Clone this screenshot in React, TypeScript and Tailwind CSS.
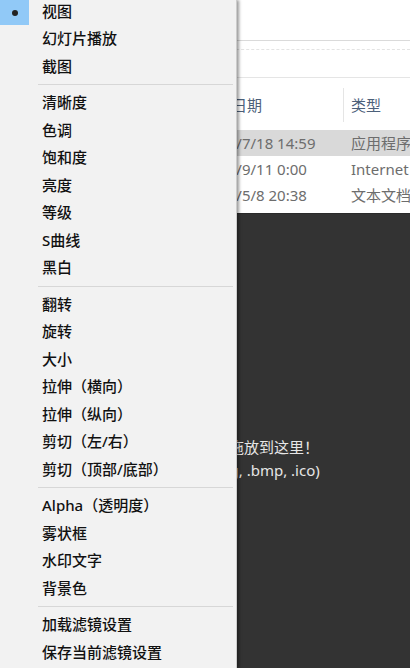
type Entry = { label: string; checked?: boolean } | "sep";

const menu: Entry[] = [
  { label: "视图", checked: true },
  { label: "幻灯片播放" },
  { label: "截图" },
  "sep",
  { label: "清晰度" },
  { label: "色调" },
  { label: "饱和度" },
  { label: "亮度" },
  { label: "等级" },
  { label: "S曲线" },
  { label: "黑白" },
  "sep",
  { label: "翻转" },
  { label: "旋转" },
  { label: "大小" },
  { label: "拉伸（横向）" },
  { label: "拉伸（纵向）" },
  { label: "剪切（左/右）" },
  { label: "剪切（顶部/底部）" },
  "sep",
  { label: "Alpha（透明度）" },
  { label: "雾状框" },
  { label: "水印文字" },
  { label: "背景色" },
  "sep",
  { label: "加载滤镜设置" },
  { label: "保存当前滤镜设置" },
];

const files = [
  { name: "PhotoViewer.exe", date: "2017/7/18 14:59", type: "应用程序", selected: true },
  { name: "网站链接", date: "2016/9/11 0:00", type: "Internet 快捷方式" },
  { name: "说明.txt", date: "2016/5/8 20:38", type: "文本文档" },
];

function ContextMenu() {
  return (
    <div className="absolute left-0 top-0 h-full w-[237px] border-r border-[#cccccc] bg-[#f2f2f2] shadow-[2px_0_3px_rgba(0,0,0,0.4)]">
      <div className="-mt-[2.5px] flex flex-col">
        {menu.map((m, i) =>
          m === "sep" ? (
            <div key={i} className="flex h-[9px] items-center pl-[38px] pr-[3px]">
              <div className="h-px flex-1 bg-[#d7d7d7]" />
            </div>
          ) : (
            <div key={i} className="flex h-[27.5px] items-center">
              <div className="flex w-[42px] shrink-0 self-start">
                {m.checked ? (
                  <div className="mt-[2.5px] flex h-[25px] w-[29px] items-center justify-center bg-[#91c9f7]">
                    <div className="h-[6px] w-[6px] rounded-full bg-[#222]" />
                  </div>
                ) : null}
              </div>
              <span className="text-[15px] font-medium leading-none text-[#111]">{m.label}</span>
            </div>
          )
        )}
      </div>
    </div>
  );
}

export default function App() {
  return (
    <div className="relative h-[668px] w-[410px] overflow-hidden whitespace-nowrap bg-white font-['Noto_Sans','Noto_Sans_CJK_SC',sans-serif]">
      <div className="flex h-full flex-col">
        <div className="h-[40px] bg-white" />
        <div className="h-px bg-[#dadada]" />
        <div className="h-[8px] bg-white" />
        <div className="h-px border-t border-dashed border-[#e3e3e3]" />
        <div className="h-[27px] bg-white" />
        <div className="h-px bg-[#e5e5e5]" />

        <div className="flex h-[52px] items-center pt-[2px] text-[15px] text-[#4c607a]">
          <div className="w-[202px] shrink-0 pl-[20px]">名称</div>
          <div className="w-[141px] shrink-0">修改日期</div>
          <div className="h-[34px] w-px shrink-0 bg-[#e5e5e5]" />
          <div className="pl-[7px]">类型</div>
        </div>

        {files.map((f) => (
          <div
            key={f.date}
            className={`flex h-[26px] shrink-0 items-center text-[15px] text-[#6d6d6d] ${
              f.selected ? "bg-[#d9d9d9]" : ""
            }`}
          >
            <div className="w-[202px] shrink-0 pl-[20px] text-black">{f.name}</div>
            <div className="w-[142px] shrink-0">{f.date}</div>
            <div className="pl-[7px]">{f.type}</div>
          </div>
        ))}

        <div className="h-[5px] shrink-0 bg-white" />

        <div className="flex-1 border-t border-[#2a2a2a] bg-[#333333] pl-[78px] pt-[222px] text-center text-[15px] leading-[22.5px] text-[#e6e6e6]">
          <p>请将图片拖放到这里！</p>
          <p>(.jpg, .png, .bmp, .ico)</p>
        </div>
      </div>

      <ContextMenu />
    </div>
  );
}
